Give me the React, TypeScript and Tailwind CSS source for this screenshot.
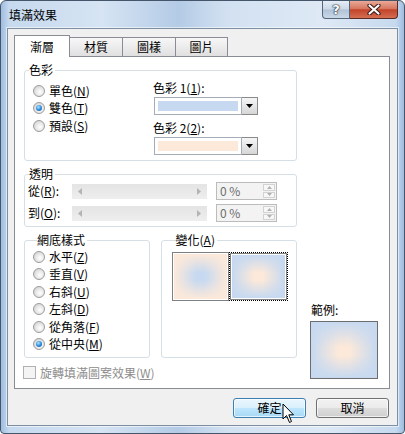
import React from 'react';

type RadioProps = { label: string; hk: string; checked?: boolean };

const Radio = ({ label, hk, checked }: RadioProps) => (
  <div className="flex items-center h-[17.5px]">
    <span className="w-[12px] h-[12px] shrink-0 rounded-full border border-[#9c9c9c] bg-[radial-gradient(circle_at_60%_60%,#ffffff_0%,#e8e8e8_45%,#c8c8c8_100%)] flex items-center justify-center">
      {checked && (
        <span className="w-[6px] h-[6px] rounded-full bg-[radial-gradient(circle_at_40%_35%,#b5e6ff_0%,#2d8fe0_50%,#0d4f92_100%)]" />
      )}
    </span>
    <span className="ml-[4px] leading-[14px] whitespace-nowrap">
      {label}(<span className="underline">{hk}</span>)
    </span>
  </div>
);

const Group = ({ title, className, children }: { title: React.ReactNode; className?: string; children: React.ReactNode }) => (
  <fieldset className={`border border-[#d5dfe5] rounded-[3px] ${className ?? ''}`}>
    <legend className="ml-[4px] pr-[2px] leading-[14px]">{title}</legend>
    {children}
  </fieldset>
);

const ColorDrop = ({ bar }: { bar: string }) => (
  <div className="flex h-[18px] w-[104px] ml-[1px] mt-[2px]">
    <div className="flex-1 border border-[#a5acb5] bg-white p-[3px]">
      <div className={`h-full ${bar}`} />
    </div>
    <div className="w-[16px] border border-[#8a8a8a] border-l-0 bg-[linear-gradient(180deg,#f6f6f6_0%,#e6e6e6_50%,#d6d6d6_100%)] flex items-center justify-center">
      <svg width="7" height="4" viewBox="0 0 7 4">
        <path d="M0 0H7L3.5 4Z" fill="#000" />
      </svg>
    </div>
  </div>
);

const Track = () => (
  <div className="w-[135px] h-[15px] bg-[linear-gradient(180deg,#e4e4e4_0%,#eeeeee_100%)] flex items-center justify-between px-[6px]">
    <svg width="4" height="7" viewBox="0 0 4 7">
      <path d="M4 0L0 3.5L4 7Z" fill="#b4b4b4" />
    </svg>
    <svg width="4" height="7" viewBox="0 0 4 7">
      <path d="M0 0L4 3.5L0 7Z" fill="#b4b4b4" />
    </svg>
  </div>
);

const Spin = () => (
  <div className="ml-[9px] w-[61px] h-[18px] border border-[#bcbcbc] bg-[#f3f3f3] flex">
    <span className="flex-1 pl-[3px] leading-[16px] text-[#6d6d6d]">0 %</span>
    <div className="w-[14px] flex flex-col gap-[1px] p-[1px]">
      <div className="flex-1 border border-[#d2d2d2] bg-[#f7f7f7] flex items-center justify-center">
        <svg width="5" height="3" viewBox="0 0 5 3">
          <path d="M0 3L2.5 0L5 3Z" fill="#b0b0b0" />
        </svg>
      </div>
      <div className="flex-1 border border-[#d2d2d2] bg-[#f7f7f7] flex items-center justify-center">
        <svg width="5" height="3" viewBox="0 0 5 3">
          <path d="M0 0L2.5 3L5 0Z" fill="#b0b0b0" />
        </svg>
      </div>
    </div>
  </div>
);

const TransRow = ({ label, hk }: { label: string; hk: string }) => (
  <div className="flex items-center h-[18px]">
    <span className="w-[47px] pl-[3px] leading-[14px] whitespace-nowrap">
      {label}(<span className="underline">{hk}</span>):
    </span>
    <Track />
    <Spin />
  </div>
);

const Tab = ({ label, active, className }: { label: string; active?: boolean; className?: string }) =>
  active ? (
    <div className={`relative z-10 h-[22px] -mb-[1px] border border-b-0 border-[#898c95] bg-white flex items-center justify-center leading-[14px] ${className ?? ''}`}>
      {label}
    </div>
  ) : (
    <div className={`mt-[2px] h-[19px] -ml-[1px] border border-b-0 border-[#898c95] bg-[linear-gradient(180deg,#f7f7f7_0%,#ececec_50%,#dfdfdf_100%)] flex items-center justify-center leading-[14px] ${className ?? ''}`}>
      {label}
    </div>
  );

const Button = ({ label, primary }: { label: string; primary?: boolean }) => (
  <div
    className={
      primary
        ? 'w-[73px] h-[20px] rounded-[3px] border border-[#3c7fb1] bg-[linear-gradient(180deg,#eaf6fd_0%,#d9f0fc_50%,#bee6fd_51%,#a7d9f5_100%)] shadow-[inset_0_0_0_1px_rgba(255,255,255,0.7)] flex items-center justify-center leading-[14px]'
        : 'w-[73px] h-[20px] rounded-[3px] border border-[#707070] bg-[linear-gradient(180deg,#f2f2f2_0%,#ebebeb_50%,#dddddd_51%,#cfcfcf_100%)] shadow-[inset_0_0_0_1px_rgba(255,255,255,0.7)] flex items-center justify-center leading-[14px]'
    }
  >
    {label}
  </div>
);

export default function App() {
  return (
    <div className="w-[405px] h-[434px] bg-white">
      <div className="relative w-[405px] h-[434px] flex flex-col rounded-t-[6px] rounded-b-[4px] border border-[#46566a] bg-[linear-gradient(90deg,#9fbde0_0%,#c6d9ee_2%,#d6e4f3_25%,#b4cbe6_44%,#d2e1f1_56%,#dee9f5_80%,#c6d9ee_98%,#9fbde0_100%)] text-[12px] text-black font-['Noto_Sans_CJK_TC','Noto_Sans',sans-serif]">
        {/* title bar */}
        <div className="h-[27px] flex justify-between">
          <span className="pl-[8px] pt-[7px] leading-[14px]">填滿效果</span>
          <div className="flex pr-[6px] h-[18px]">
            <div className="w-[28px] h-[18px] border border-t-0 border-[#56667a] rounded-bl-[4px] bg-[linear-gradient(180deg,#e6eef6_0%,#cbd8e6_48%,#b0c2d6_52%,#cad9e8_100%)] flex items-center justify-center">
              <span className="text-white font-bold text-[13px] leading-[14px] font-['DejaVu_Sans',sans-serif] [text-shadow:0_0_1px_#1d2b3a,0_0_2px_#1d2b3a,0_0_1px_#1d2b3a]">?</span>
            </div>
            <div className="w-[48px] h-[18px] border border-t-0 border-l-0 border-[#5a2b24] rounded-br-[4px] bg-[linear-gradient(180deg,#e9a999_0%,#d6765f_45%,#c2432a_52%,#d56f52_100%)] flex items-center justify-center">
              <svg width="14" height="11" viewBox="0 0 14 11">
                <path d="M2.5 1.5L11.5 9.5M11.5 1.5L2.5 9.5" stroke="#3a1a14" strokeWidth="4.2" strokeLinecap="round" />
                <path d="M2.5 1.5L11.5 9.5M11.5 1.5L2.5 9.5" stroke="#ffffff" strokeWidth="2.2" strokeLinecap="round" />
              </svg>
            </div>
          </div>
        </div>

        {/* client area */}
        <div className="mx-[6px] h-[398px] border border-[#7f8fa2] bg-[#f0f0f0] shadow-[0_0_0_1px_rgba(255,255,255,0.55)] pt-[6px] pl-[6px] pr-[8px] flex flex-col">
          <div className="flex h-[21px] items-start">
            <Tab label="漸層" active className="w-[56px]" />
            <Tab label="材質" className="w-[54px]" />
            <Tab label="圖樣" className="w-[54px]" />
            <Tab label="圖片" className="w-[53px]" />
          </div>

          <div className="w-[376px] h-[333px] border border-[#898c95] bg-white flex pl-[9px] pt-[6px]">
            {/* left column */}
            <div className="w-[273px] flex flex-col">
              <Group title="色彩" className="w-[273px] pb-[5px]">
                <div className="flex">
                  <div className="w-[128px] pl-[8px] pt-[5px]">
                    <Radio label="單色" hk="N" />
                    <Radio label="雙色" hk="T" checked />
                    <Radio label="預設" hk="S" />
                  </div>
                  <div className="pt-[4px]">
                    <div className="leading-[14px]">
                      色彩 1(<span className="underline">1</span>):
                    </div>
                    <ColorDrop bar="bg-[#c6d9f1]" />
                    <div className="leading-[14px] mt-[6px]">
                      色彩 2(<span className="underline">2</span>):
                    </div>
                    <ColorDrop bar="bg-[#fde9d9]" />
                  </div>
                </div>
              </Group>

              <Group title="透明" className="w-[273px] mt-[6px] pt-[1px] pb-[4px]">
                <div className="flex flex-col gap-[4px]">
                  <TransRow label="從" hk="R" />
                  <TransRow label="到" hk="O" />
                </div>
              </Group>

              <div className="flex mt-[6px] gap-[11px]">
                <Group title="網底樣式" className="w-[126px] pl-[8px] pt-[1px] pb-[4px]">
                  <Radio label="水平" hk="Z" />
                  <Radio label="垂直" hk="V" />
                  <Radio label="右斜" hk="U" />
                  <Radio label="左斜" hk="D" />
                  <Radio label="從角落" hk="F" />
                  <Radio label="從中央" hk="M" checked />
                </Group>
                <Group
                  title={
                    <>
                      變化(<span className="underline">A</span>)
                    </>
                  }
                  className="w-[137px] pl-[10px] pt-[5px]"
                >
                  <div className="flex">
                    <div className="w-[57px] h-[49px] border border-[#808080] bg-white p-[1px]">
                      <div className="w-full h-full bg-[linear-gradient(90deg,#fde9d9_0%,rgba(253,233,217,0)_42%,rgba(253,233,217,0)_58%,#fde9d9_100%),linear-gradient(180deg,#fde9d9_0%,#c6d9f1_42%,#c6d9f1_58%,#fde9d9_100%)]" />
                    </div>
                    <div className="w-[59px] h-[49px] border border-dotted border-black">
                      <div className="w-full h-full border border-[#808080] bg-white p-[1px]">
                        <div className="w-full h-full bg-[linear-gradient(90deg,#c6d9f1_0%,rgba(198,217,241,0)_42%,rgba(198,217,241,0)_58%,#c6d9f1_100%),linear-gradient(180deg,#c6d9f1_0%,#fde9d9_42%,#fde9d9_58%,#c6d9f1_100%)]" />
                      </div>
                    </div>
                  </div>
                </Group>
              </div>

              <div className="flex items-center mt-[8px] -ml-[1px] h-[13px]">
                <span className="w-[13px] h-[13px] border border-[#b1b1b1] bg-[#f4f4f4]" />
                <span className="ml-[4px] leading-[14px] text-[#8d8d8d]">
                  旋轉填滿圖案效果(<span className="underline">W</span>)
                </span>
              </div>
            </div>

            {/* right column */}
            <div className="ml-[13px] w-[68px] flex flex-col justify-end pb-[9px]">
              <div className="leading-[14px] pl-[1px]">範例:</div>
              <div className="mt-[4px] w-[68px] h-[58px] border border-[#6d6d6d] bg-[linear-gradient(90deg,#c6d9f1_0%,rgba(198,217,241,0)_42%,rgba(198,217,241,0)_58%,#c6d9f1_100%),linear-gradient(180deg,#c6d9f1_0%,#fde9d9_45%,#fde9d9_60%,#c6d9f1_100%)]" />
            </div>
          </div>

          <div className="flex justify-end gap-[10px] mt-[9px]">
            <Button label="確定" primary />
            <Button label="取消" />
          </div>
        </div>

        {/* mouse pointer */}
        <svg className="absolute left-[281px] top-[402px]" width="13" height="21" viewBox="0 0 13 21">
          <path d="M1 1V16L4.5 12.5L7.5 19.5L9.5 18.5L6.8 11.8H11.5Z" fill="#ffffff" stroke="#000000" strokeWidth="1" strokeLinejoin="round" />
        </svg>
      </div>
    </div>
  );
}
